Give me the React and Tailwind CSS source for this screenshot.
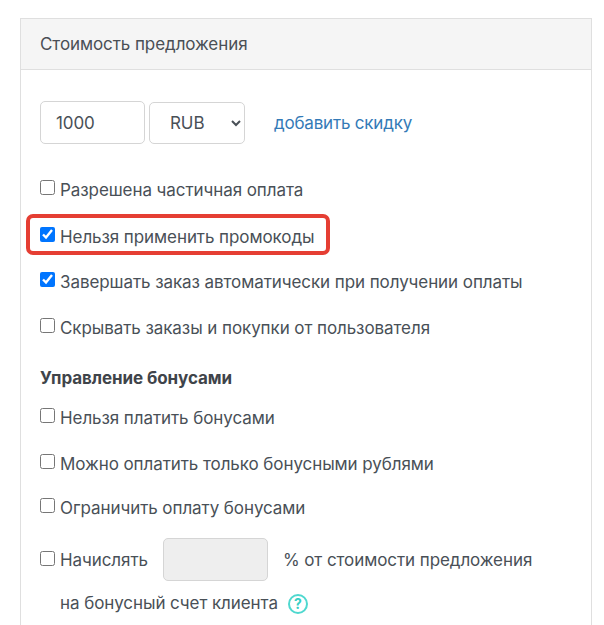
import React from "react";

function Check({ label, checked = false, className = "" }) {
  return (
    <label className={`flex items-start text-[#495057] ${className}`}>
      <input type="checkbox" defaultChecked={checked} className="w-[15px] h-[15px] mt-[3px] mr-[5px] shrink-0 accent-[#0075ff]" />
      <span className="mt-[1px] -mb-[1px]">{label}</span>
    </label>
  );
}

export default function App() {
  return (
    <div className="h-[625px] w-[604px] overflow-hidden bg-white pt-[18px] pl-[20px] pr-[12px] text-[17px] leading-[24px] tracking-[-0.08px] text-[#495057]" style={{ fontFamily: "Inter, 'Noto Sans', sans-serif" }}>
      <div className="border border-b-0 border-[#dfdfdf] h-[640px]">
        <div className="h-[51px] bg-[#f5f5f5] border-b border-[#dfdfdf] pl-[19px] flex items-center text-[#4a4f55]">Стоимость предложения</div>
        <div className="pl-[19px] pt-[31px]">
          <div className="flex items-center">
            <input defaultValue="1000" className="w-[105px] h-[43px] rounded-[5px] border border-[#d5d5d5] px-[15px] text-[#495057] outline-none" />
            <select defaultValue="RUB" className="ml-[4px] w-[96px] h-[42px] rounded-[5px] border border-[#d5d5d5] pl-[16px] bg-white text-[#495057] outline-none">
              <option>RUB</option>
            </select>
            <a className="ml-[29px] tracking-[-0.2px] text-[#337ab7]">добавить скидку</a>
          </div>
          <Check className="mt-[33px]" label="Разрешена частичная оплата" />
          <div className="relative mt-[23px]">
            <div className="absolute left-[-14px] top-[-10px] w-[304px] h-[41px] border-[4px] border-[#e53e33] rounded-[7px]"></div>
            <Check checked label="Нельзя применить промокоды" />
          </div>
          <Check className="mt-[21px]" checked label="Завершать заказ автоматически при получении оплаты" />
          <Check className="mt-[22px]" label="Скрывать заказы и покупки от пользователя" />
          <div className="mt-[27px] font-bold text-[#3f444a]">Управление бонусами</div>
          <Check className="mt-[15px]" label="Нельзя платить бонусами" />
          <Check className="mt-[22px]" label="Можно оплатить только бонусными рублями" />
          <Check className="mt-[20px]" label="Ограничить оплату бонусами" />
          <div className="flex items-center mt-[19px]">
            <input type="checkbox" className="w-[15px] h-[15px] mr-[5px] -mt-[3px] shrink-0" />
            <span>Начислять</span>
            <input disabled className="ml-[15px] mr-[15px] w-[105px] h-[43px] rounded-[5px] border border-[#d5d5d5] bg-[#eeeeee]" />
            <span>% от стоимости предложения</span>
          </div>
          <div className="flex items-center mt-[10px] pl-[20px]">
            <span>на бонусный счет клиента</span>
            <span className="ml-[10px] mt-[2px] w-[20px] h-[20px] rounded-full border-2 border-[#4fd8cf] text-[#35cfc5] text-[14px] font-bold leading-none flex items-center justify-center">?</span>
          </div>
        </div>
      </div>
    </div>
  );
}
